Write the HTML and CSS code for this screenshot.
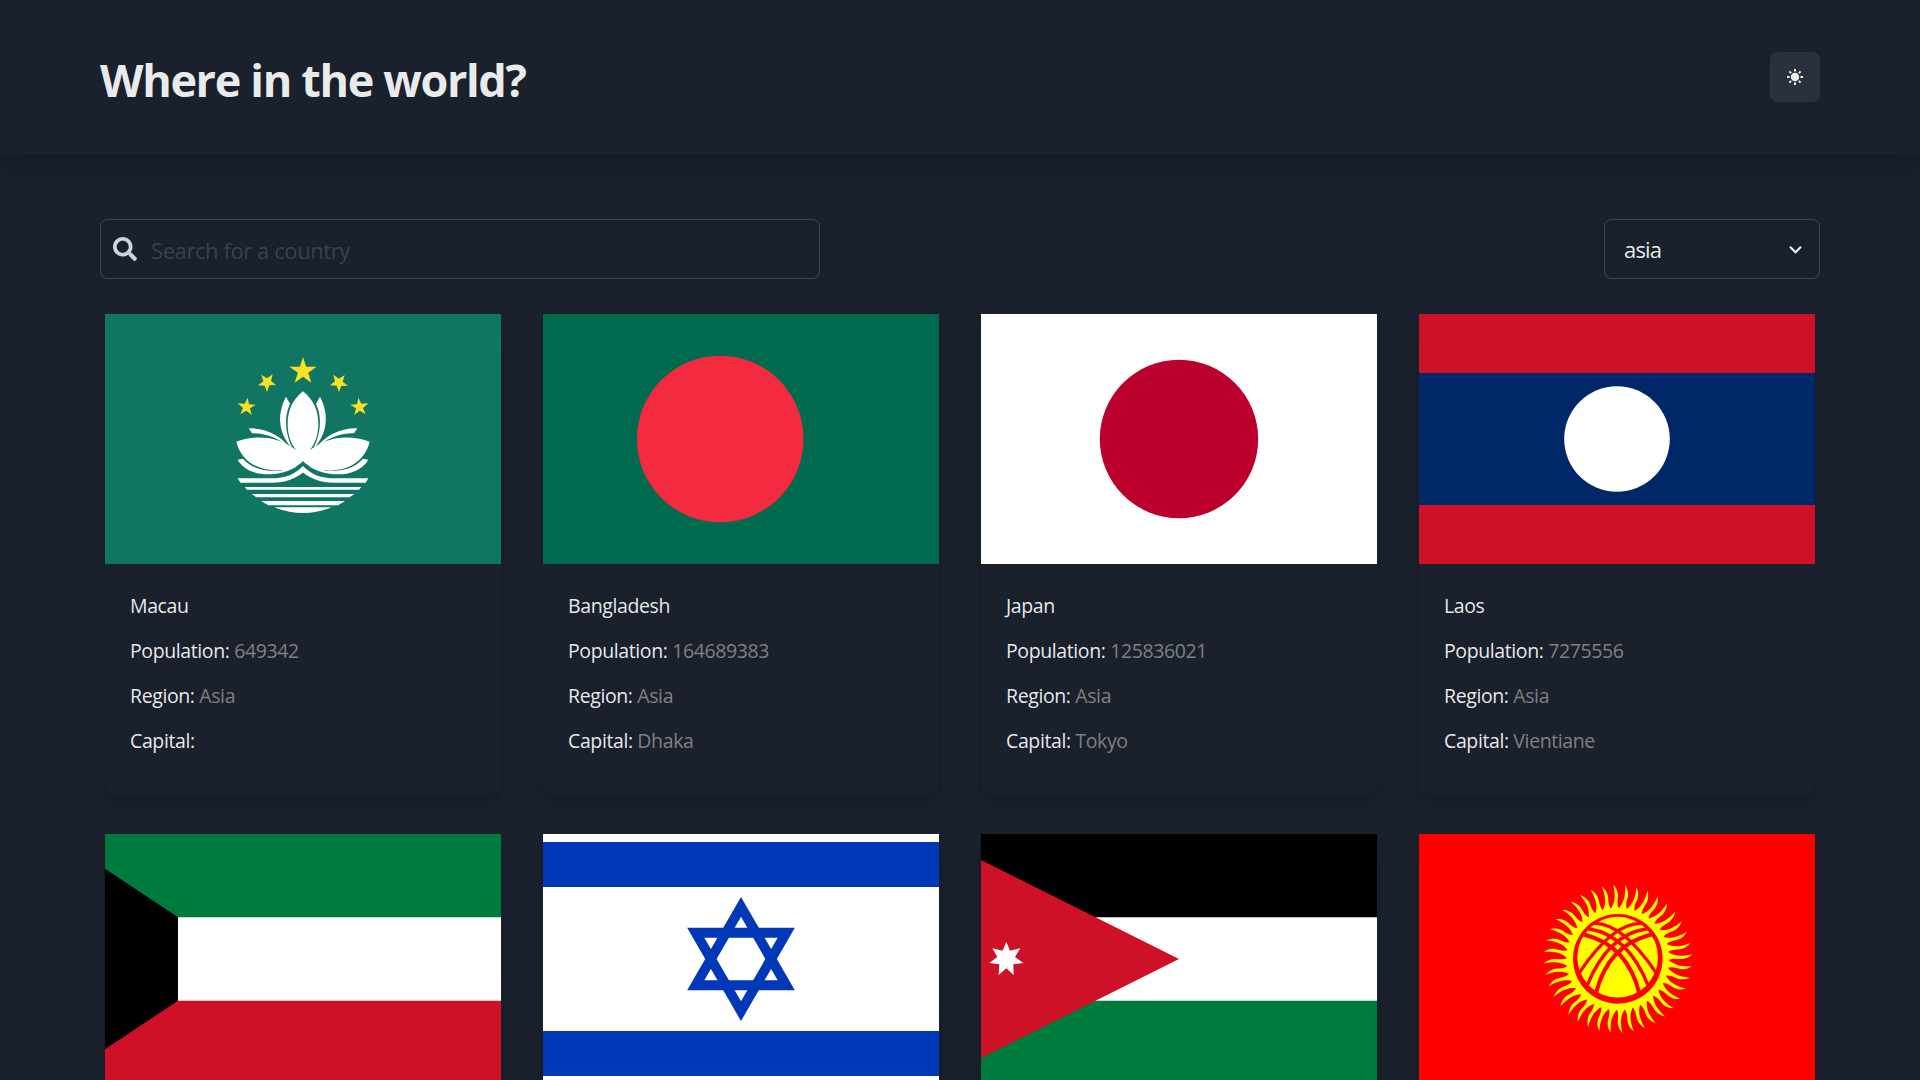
FILE: index.html
```html
<!DOCTYPE html>
<html lang="en">
<head>
<meta charset="utf-8">
<title>Where in the world?</title>
<link rel="stylesheet" href="styles.css">
</head>
<body>
<header class="header">
  <h1 class="title">Where in the world?</h1>
  <button class="theme-toggle" aria-label="Toggle theme">
    <svg width="20" height="20" viewBox="-10 -10 20 20" stroke="currentColor" stroke-width="2" fill="none">
      <circle r="4.200" fill="currentColor" stroke="none"/>
      <path d="M0-8v2.6M0 8V5.4M-8 0h2.6M8 0H5.4M-5.6-5.6l1.700 1.700M5.600-5.600L3.900-3.900M-5.600 5.600l1.700-1.700M5.600 5.600L3.900 3.900"/>
    </svg>
  </button>
</header>
<main class="main">
  <div class="controls">
    <label class="search">
      <svg class="search-icon" width="24" height="24" viewBox="0 0 512 512" fill="currentColor"><path d="M505 442.7L405.3 343c-4.5-4.5-10.6-7-17-7H372c27.6-35.3 44-79.7 44-128C416 93.1 322.9 0 208 0S0 93.1 0 208s93.1 208 208 208c48.3 0 92.7-16.4 128-44v16.3c0 6.4 2.5 12.5 7 17l99.7 99.7c9.4 9.4 24.6 9.4 33.9 0l28.3-28.3c9.4-9.4 9.4-24.6.1-34zM208 336c-70.7 0-128-57.2-128-128 0-70.7 57.2-128 128-128 70.7 0 128 57.2 128 128 0 70.7-57.2 128-128 128z"/></svg>
      <input class="search-input" type="text" placeholder="Search for a country">
    </label>
    <div class="region-select">
      <span class="region-value">asia</span>
      <svg width="25" height="25" viewBox="0 0 24 24" fill="currentColor"><path d="M16.59 8.59L12 13.17 7.41 8.59 6 10l6 6 6-6z"/></svg>
    </div>
  </div>

  <div class="grid">
    <article class="card">
      <svg class="flag" viewBox="0 0 396 250">
        <path fill="#107562" d="M0 0h396v250H0z"/>
        <g transform="translate(105 26) scale(.33333)">
          <g fill="#fbde26">
            <path d="M279 51l9.500 29.500H320L294.500 98.500 304 128l-25-18-25 18 9.500-29.500L238 80.500h31.500z"/>
            <path d="M171 156l-7-19-20-1 16-12-6-20 17 11 17-12-5 20 15 12-20 1z"/>
            <path d="M387 156l-7-19-20-1 15-12-5-20 17 12 17-11-6 20 16 12-20 1z"/>
            <path d="M113 173l4 20 20 1-17 11 5 20-16-13-18 11 8-19-16-14 21 1z"/>
            <path d="M445 173l-4 20-20 1 17 11-5 20 16-13 18 11-8-19 16-14-21 1z"/>
          </g>
          <g fill="#fff">
            <path d="M279 154C245 181 233 215 233 252C233 285 243 311 259 331C214 294 148 280 79 305C94 365 146 395 214 391C242 389 265 379 279 363C293 379 316 389 344 391C412 395 464 365 479 305C410 280 344 294 299 331C315 311 325 285 325 252C325 215 313 181 279 154z"/>
            <g id="lotus-side">
              <path d="M228 170L240 191C220 234 227 283 248 326C209 286 197 229 228 170z"/>
              <path d="M116 265C169 264 215 288 241 326C211 297 169 279 126 280z"/>
              <path d="M83 359L99 356C129 389 166 394 211 392L262 378C222 407 120 422 83 359z"/>
              <path d="M279 378C254 404 224 415 184 415H83L91 428H187C225 428 254 418 280 397z"/>
            </g>
            <use href="#lotus-side" transform="matrix(-1 0 0 1 558 0)"/>
            <path d="M104 441h350l-7 8H111zM125 462h308l-14 10H139zM153 483h252l-21 13H175zM193 502h172q-86 34-172 0z"/>
          </g>
        </g>
      </svg>
      <div class="info"><p>Macau</p><p>Population: <span class="value">649342</span></p><p>Region: <span class="value">Asia</span></p><p>Capital:</p></div>
    </article>
    <article class="card">
      <svg class="flag" viewBox="0 0 396 250"><path fill="#006a4e" d="M0 0h396v250H0z"/><circle cx="177.200" cy="125" r="83.300" fill="#f42a41"/></svg>
      <div class="info"><p>Bangladesh</p><p>Population: <span class="value">164689383</span></p><p>Region: <span class="value">Asia</span></p><p>Capital: <span class="value">Dhaka</span></p></div>
    </article>
    <article class="card">
      <svg class="flag" viewBox="0 0 396 250"><path fill="#fff" d="M0 0h396v250H0z"/><circle cx="198" cy="125" r="79.200" fill="#bc002d"/></svg>
      <div class="info"><p>Japan</p><p>Population: <span class="value">125836021</span></p><p>Region: <span class="value">Asia</span></p><p>Capital: <span class="value">Tokyo</span></p></div>
    </article>
    <article class="card">
      <svg class="flag" viewBox="0 0 396 250"><path fill="#ce1126" d="M0 0h396v250H0z"/><path fill="#002868" d="M0 59h396v132H0z"/><circle cx="198" cy="125" r="52.800" fill="#fff"/></svg>
      <div class="info"><p>Laos</p><p>Population: <span class="value">7275556</span></p><p>Region: <span class="value">Asia</span></p><p>Capital: <span class="value">Vientiane</span></p></div>
    </article>
    <article class="card">
      <svg class="flag" viewBox="52 0 396 250"><path fill="#fff" d="M0 0h500v250H0z"/><path fill="#007a3d" d="M0 0h500v83.330H0z"/><path fill="#ce1126" d="M0 166.670h500V250H0z"/><path d="M0 0l125 83.330v83.340L0 250z"/></svg>
    </article>
    <article class="card">
      <svg class="flag" viewBox="0 0 396 250"><path fill="#fff" d="M0 0h396v250H0z"/>
        <path fill="#0038b8" d="M0 8h396v44.900H0zM0 197h396v45H0z"/>
        <g transform="translate(117 -14) scale(.33333)" fill="#0038b8" fill-rule="evenodd">
          <path d="M243 231L404.500 510.500h-323zM243 290L133 481h220z"/>
          <path d="M243 603L404.500 323.500h-323zM243 544L133 353h220z"/>
        </g>
      </svg>
    </article>
    <article class="card">
      <svg class="flag" viewBox="52 0 396 250"><path fill="#fff" d="M0 0h500v250H0z"/><path d="M0 0h500v83.330H0z"/><path fill="#007a3d" d="M0 166.670h500V250H0z"/><path fill="#ce1126" d="M0 0l250 125L0 250z"/>
        <path fill="#fff" transform="translate(41 -14) scale(.33333)" d="M109 365l11 27 31-7-16 26 25 18-30 4 1 32-22-20-23 20 2-32-30-4 24-18-15-26 31 7z"/></svg>
    </article>
    <article class="card">
      <svg class="flag" viewBox="0 0 396 250">
        <defs>
          <path id="ray" d="M-15-149C-7-158 0-172 1-187C2-199 1-210-1-223C6-214 11-204 11-192C11-178 4-166 13-149z"/>
          <g id="rays"><use href="#ray"/><use href="#ray" transform="rotate(9)"/><use href="#ray" transform="rotate(18)"/><use href="#ray" transform="rotate(27)"/><use href="#ray" transform="rotate(36)"/></g>
          <clipPath id="disc"><circle cx="293" cy="292" r="122"/></clipPath>
        </defs>
        <path fill="#f00" d="M0 0h396v250H0z"/>
        <g transform="translate(101 26) scale(.33333)">
          <g transform="translate(293.500 297) rotate(-3.200)" fill="#ff0">
            <circle r="153"/>
            <use href="#rays"/><use href="#rays" transform="rotate(45)"/><use href="#rays" transform="rotate(90)"/><use href="#rays" transform="rotate(135)"/><use href="#rays" transform="rotate(180)"/><use href="#rays" transform="rotate(225)"/><use href="#rays" transform="rotate(270)"/><use href="#rays" transform="rotate(315)"/>
          </g>
          <circle cx="293.500" cy="296.500" r="134.500" fill="#f00"/>
          <circle cx="293" cy="291.500" r="121" fill="#ff0"/>
          <g clip-path="url(#disc)" fill="none" stroke="#f00">
            <g id="bands">
              <path stroke-width="9.500" d="M212 189L220 190Q307 187 408 338L420 360"/>
              <path stroke-width="10" d="M198 205L208 207Q324 225 385 378L392 395"/>
              <path stroke-width="12" d="M180 222L197 225Q323 258 358 400L361 415"/>
            </g>
            <use href="#bands" transform="matrix(-1 0 0 1 586 0)"/>
          </g>
        </g>
      </svg>
    </article>
  </div>
</main>
</body>
</html>
```
FILE: styles.css
```css
* { box-sizing: border-box; margin: 0; }
html { font-size: 20px; }
body {
  height: 1080px;
  overflow: hidden;
  background: #1a202c;
  color: rgba(255, 255, 255, .92);
  font-family: "Segoe UI", "Open Sans", "Noto Sans", sans-serif;
  font-size: 19.5px;
  letter-spacing: -.39px;
  line-height: 30px;
}
.header {
  display: flex;
  justify-content: space-between;
  align-items: flex-start;
  height: 154px;
  padding: 52px 100px 0;
  box-shadow: 0 20px 25px -5px rgba(0, 0, 0, .1), 0 10px 10px -5px rgba(0, 0, 0, .04);
}
.title {
  font-size: 45px;
  line-height: 56px;
  font-weight: 700;
  letter-spacing: -1.35px;
}
.theme-toggle {
  display: grid;
  place-items: center;
  width: 50px;
  height: 50px;
  padding: 0;
  border: 0;
  border-radius: 7.5px;
  background: rgba(255, 255, 255, .08);
  color: inherit;
}
.main { padding: 65px 100px 0; }
.controls {
  display: flex;
  justify-content: space-between;
}
.search, .region-select {
  display: flex;
  align-items: center;
  height: 60px;
  border: 1px solid rgba(255, 255, 255, .16);
  border-radius: 7.5px;
  font-size: 22px;
  letter-spacing: -.42px;
}
.search {
  width: 720px;
  gap: 14px;
  padding-left: 12px;
}
.search-icon { color: #cbd5e0; }
.search-input {
  flex: 1;
  padding: 2px 0 0;
  border: 0;
  outline: 0;
  background: none;
  color: inherit;
  font: inherit;
  letter-spacing: inherit;
}
.search-input::placeholder { color: rgba(255, 255, 255, .16); opacity: 1; }
.region-select {
  justify-content: space-between;
  width: 216px;
  padding: 0 11px 0 19px;
}
.region-value { letter-spacing: -.8px; }
.grid {
  display: grid;
  grid-template-columns: repeat(4, 396px);
  gap: 40px 42px;
  padding: 35px 5px 0;
}
.card {
  height: 480px;
  border-radius: 10px;
  box-shadow: 0 10px 15px -3px rgba(0, 0, 0, .1), 0 4px 6px -2px rgba(0, 0, 0, .05);
}
.flag {
  display: block;
  width: 396px;
  height: 250px;
}
.info {
  display: grid;
  gap: 15px;
  padding: 27px 25px;
}
.value { color: gray; }
```
